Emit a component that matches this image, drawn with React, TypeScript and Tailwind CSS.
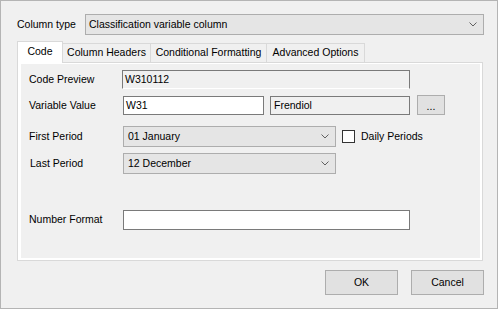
import React from "react";

const FONT = "font-['Liberation_Sans',Arial,sans-serif]";

function Chevron() {
  return (
    <svg width="8" height="5" viewBox="0 0 8 5" className="shrink-0">
      <polyline points="0.5,0.5 4,4 7.5,0.5" fill="none" stroke="#606060" strokeWidth="1" />
    </svg>
  );
}

function Combo({ value, className }: { value: string; className: string }) {
  return (
    <div className={`flex items-center justify-between bg-[#e5e5e5] border border-[#adadad] pl-[3px] pr-[6px] ${className}`}>
      <span className="leading-none">{value}</span>
      <Chevron />
    </div>
  );
}

function Tab({ label, width, active }: { label: string; width: string; active?: boolean }) {
  if (active) {
    return (
      <div className={`relative z-10 -mb-px flex h-[22px] items-center justify-center border border-b-0 border-[#d9d9d9] bg-white pb-[2px] ${width}`}>
        {label}
      </div>
    );
  }
  return (
    <div className={`-ml-px flex h-[19px] items-center justify-center border border-b-0 border-[#d9d9d9] bg-[#f0f0f0] ${width}`}>
      {label}
    </div>
  );
}

export default function App() {
  return (
    <div className={`w-[498px] h-[309px] overflow-hidden border border-[#b4b4b4] bg-[#f0f0f0] text-[10.5px] text-black ${FONT}`}>
      {/* column type */}
      <div className="flex items-center pt-[13px] pl-[16px]">
        <span className="w-[68px]">Column type</span>
        <Combo value="Classification variable column" className="w-[399px] h-[21px] pr-[5px]" />
      </div>

      {/* tabs */}
      <div className="mt-[6px] ml-[16px] flex h-[21px] items-end">
        <Tab label="Code" width="w-[46px]" active />
        <Tab label="Column Headers" width="w-[89px]" />
        <Tab label="Conditional Formatting" width="w-[117px]" />
        <Tab label="Advanced Options" width="w-[99px]" />
      </div>

      {/* tab page */}
      <div className="ml-[16px] w-[466px] h-[199px] border border-[#d9d9d9] bg-white pt-px pl-[3px] pr-[2px] pb-[2px]">
        <div className="h-full bg-[#f0f0f0] pl-[8px] pt-[6px]">
          <div className="flex h-[19px] items-center">
            <span className="w-[93px]">Code Preview</span>
            <div className="flex h-[19px] w-[288px] items-center border border-[#7a7a7a] border-b-white bg-[#f0f0f0] pl-[2px]">
              W310112
            </div>
          </div>

          <div className="mt-[7px] flex h-[19px] items-center">
            <span className="w-[94px]">Variable Value</span>
            <div className="flex h-[19px] w-[141px] items-center border border-[#7a7a7a] bg-white pl-[2px]">W31</div>
            <div className="ml-[6px] flex h-[19px] w-[140px] items-center border border-[#7a7a7a] bg-[#f0f0f0] pl-[3px]">
              Frendiol
            </div>
            <button className="ml-[7px] -mt-[1px] flex h-[20px] w-[28px] items-center justify-center border border-[#adadad] bg-[#e1e1e1] pt-[3px] leading-none">
              ...
            </button>
          </div>

          <div className="mt-[11px] flex h-[21px] items-center">
            <span className="w-[94px]">First Period</span>
            <Combo value="01 January" className="w-[213px] h-[21px] pl-[4px]" />
            <div className="ml-[6px] h-[13px] w-[13px] border border-[#333333] bg-white" />
            <span className="ml-[6px]">Daily Periods</span>
          </div>

          <div className="mt-[6px] flex h-[21px] items-center">
            <span className="w-[94px] pl-px">Last Period</span>
            <Combo value="12 December" className="w-[213px] h-[21px] pl-[4px]" />
          </div>

          <div className="mt-[36px] flex h-[20px] items-center">
            <span className="w-[94px]">Number Format</span>
            <div className="h-[20px] w-[287px] border border-[#7a7a7a] bg-white" />
          </div>
        </div>
      </div>

      {/* buttons */}
      <div className="mt-[9px] flex justify-end gap-[13px] pr-[13px]">
        <button className="h-[25px] w-[73px] border border-[#adadad] bg-[#e1e1e1]">OK</button>
        <button className="h-[25px] w-[73px] border border-[#adadad] bg-[#e1e1e1]">Cancel</button>
      </div>
    </div>
  );
}
